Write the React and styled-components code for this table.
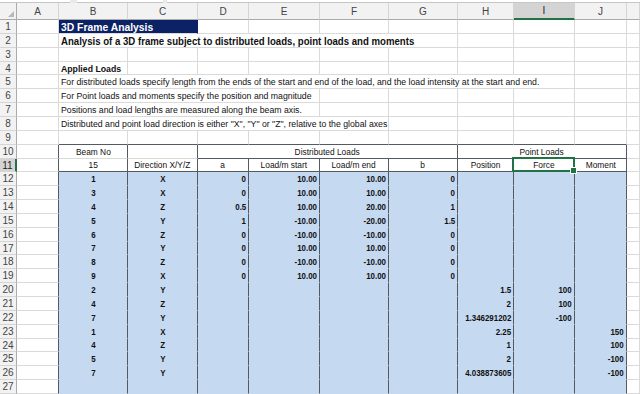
import React from "react";
import styled, { createGlobalStyle, css } from "styled-components";

const GlobalStyle = createGlobalStyle`
  html, body {
    margin: 0;
    padding: 0;
    background: #ffffff;
    overflow: hidden;
  }
  body {
    font-family: "Liberation Sans", Arial, sans-serif;
  }
`;

const COL_WIDTHS = [17, 42, 69, 70, 51, 71, 69, 69, 56, 61, 52, 13];
const LETTERS = ["A", "B", "C", "D", "E", "F", "G", "H", "I", "J", ""];
const ROW_COUNT = 27;
const ROW_STEP = 13.85;

const GRID = "#dadada";
const DARK = "#545a62";
const BLUE = "#c5d9f1";
const NAVY = "#0b2265";
const GREEN = "#217346";

const rowHeights = Array.from({ length: ROW_COUNT }, (_, i) =>
  Math.round((i + 1) * ROW_STEP) - Math.round(i * ROW_STEP)
);

const Page = styled.div`
  width: 640px;
  height: 394px;
  overflow: hidden;
  display: flex;
  flex-direction: column;
`;

const TopStrip = styled.div`
  height: 3px;
  display: flex;
  background: #e9e9e9;
`;

const StripBox = styled.div`
  width: ${(p) => p.$w}px;
  flex: ${(p) => (p.$grow ? 1 : "none")};
  margin-left: ${(p) => p.$gap || 0}px;
  background: #ffffff;
  border-bottom: 1px solid #c6c6c6;
`;

const Sheet = styled.div`
  display: grid;
  grid-template-columns: ${COL_WIDTHS.map((w) => w + "px").join(" ")};
  grid-template-rows: 17px ${(p) => p.$rows};
`;

const Corner = styled.div`
  position: relative;
  background: #f2f2f2;
  border-right: 1px solid #ababab;
  border-bottom: 1px solid #ababab;
  &::after {
    content: "";
    position: absolute;
    right: 2px;
    bottom: 2px;
    border-left: 6px solid transparent;
    border-bottom: 6px solid #b8b8b8;
  }
`;

const ColHead = styled.div`
  display: flex;
  align-items: center;
  justify-content: center;
  font-size: 10px;
  color: ${(p) => (p.$active ? "#1e1e1e" : "#444")};
  background: ${(p) => (p.$active ? "#d4d4d4" : "#f2f2f2")};
  border-right: 1px solid #d5d5d5;
  border-bottom: ${(p) => (p.$active ? `2px solid ${GREEN}` : "1px solid #ababab")};
  box-sizing: border-box;
`;

const RowHead = styled.div`
  display: flex;
  align-items: center;
  justify-content: center;
  font-size: 10px;
  color: ${(p) => (p.$active ? "#1e1e1e" : "#444")};
  background: ${(p) => (p.$active ? "#d4d4d4" : "#f2f2f2")};
  border-bottom: 1px solid #d5d5d5;
  border-right: ${(p) => (p.$active ? `2px solid ${GREEN}` : "1px solid #ababab")};
  box-sizing: border-box;
`;

const Cell = styled.div`
  position: relative;
  grid-column: span ${(p) => p.$span};
  box-sizing: border-box;
  display: flex;
  align-items: center;
  justify-content: ${(p) =>
    p.$align === "right" ? "flex-end" : p.$align === "center" ? "center" : "flex-start"};
  padding: 0 2px;
  white-space: nowrap;
  background: ${(p) => p.$bg || "#ffffff"};
  border-right: 1px solid ${(p) => p.$right};
  border-bottom: 1px solid ${(p) => p.$bottom};
  ${(p) =>
    p.$selected &&
    css`
      &::after {
        content: "";
        position: absolute;
        left: -2px;
        top: -2px;
        right: -1px;
        bottom: -1px;
        border: 2px solid ${GREEN};
      }
      &::before {
        content: "";
        position: absolute;
        right: -3px;
        bottom: -3px;
        width: 5px;
        height: 5px;
        background: ${GREEN};
        border: 1px solid #fff;
        z-index: 2;
      }
    `}
`;

// Excel's GDI text is a touch narrower than the browser's, hence the scaleX
const CellText = styled.span`
  display: inline-block;
  flex: none;
  font-size: ${(p) => p.$size}px;
  font-weight: ${(p) => (p.$bold ? 700 : 400)};
  color: ${(p) => (p.$title ? "#ffffff" : "#111")};
  transform: scaleX(0.9);
  transform-origin: ${(p) => (p.$align === "right" ? "right" : p.$align === "center" ? "center" : "left")} center;
`;

const T = (c, text, opts = {}) => ({ c, text, span: 1, size: 9.7, ...opts });

const dataRows = [
  ["1", "X", "0", "10.00", "10.00", "0", "", "", ""],
  ["3", "X", "0", "10.00", "10.00", "0", "", "", ""],
  ["4", "Z", "0.5", "10.00", "20.00", "1", "", "", ""],
  ["5", "Y", "1", "-10.00", "-20.00", "1.5", "", "", ""],
  ["6", "Z", "0", "-10.00", "-10.00", "0", "", "", ""],
  ["7", "Y", "0", "10.00", "10.00", "0", "", "", ""],
  ["8", "Z", "0", "-10.00", "-10.00", "0", "", "", ""],
  ["9", "X", "0", "10.00", "10.00", "0", "", "", ""],
  ["2", "Y", "", "", "", "", "1.5", "100", ""],
  ["4", "Z", "", "", "", "", "2", "100", ""],
  ["7", "Y", "", "", "", "", "1.346291202", "-100", ""],
  ["1", "X", "", "", "", "", "2.25", "", "150"],
  ["4", "Z", "", "", "", "", "1", "", "100"],
  ["5", "Y", "", "", "", "", "2", "", "-100"],
  ["7", "Y", "", "", "", "", "4.038873605", "", "-100"],
  ["", "", "", "", "", "", "", "", ""],
];

const headRow11 = ["15", "Direction X/Y/Z", "a", "Load/m start", "Load/m end", "b", "Position", "Force", "Moment"];

const sheetRows = {
  1: [T(2, "3D Frame Analysis", { span: 2, title: true, bold: true, bg: NAVY, size: 11.5 })],
  2: [T(2, "Analysis of a 3D frame subject to distributed loads, point loads and moments", { span: 6, bold: true, size: 10.7 })],
  4: [T(2, "Applied Loads", { bold: true })],
  5: [
    T(2, "For distributed loads specify length from the ends of the start and end of the load, and the load intensity at the start and end.", { span: 8 }),
  ],
  6: [T(2, "For Point loads and moments specify the position and magnitude", { span: 4 })],
  7: [T(2, "Positions and load lengths are measured along the beam axis.", { span: 4 })],
  8: [T(2, 'Distributed and point load direction is either "X",  "Y" or "Z", relative to the global axes', { span: 5 })],
  10: [
    T(2, "Beam No", { align: "center", size: 9.3 }),
    T(3, ""),
    T(4, "Distributed Loads", { span: 4, align: "center", size: 9.3 }),
    T(8, "Point Loads", { span: 3, align: "center", size: 9.3 }),
  ],
  11: headRow11.map((h, i) => T(i + 2, h, { align: "center", size: 9.3, selected: i === 7 })),
};

dataRows.forEach((vals, i) => {
  sheetRows[12 + i] = vals.map((v, j) =>
    T(j + 2, v, { bold: true, bg: BLUE, size: 8.8, align: j < 2 ? "center" : "right" })
  );
});

const rightColor = (r, endCol, bg) => {
  if (r >= 10 && [1, 2, 3, 7, 10].includes(endCol)) return DARK;
  if (r >= 11 && [4, 5, 6, 8, 9].includes(endCol)) return DARK;
  return bg && bg !== "#ffffff" ? bg : GRID;
};

const bottomColor = (r, startCol, bg) => {
  if (r === 9 && startCol >= 2 && startCol <= 10) return DARK;
  if (r === 10 && startCol >= 4 && startCol <= 10) return DARK;
  if (r === 11 && startCol >= 2 && startCol <= 10) return DARK;
  if (bg === BLUE) return BLUE;
  return GRID;
};

function buildRow(r) {
  const given = sheetRows[r] || [];
  const cells = [];
  let c = 1;
  while (c <= 11) {
    const hit = given.find((g) => g.c === c);
    const cell = hit || { c, span: 1, text: "", size: 9.7 };
    cells.push(cell);
    c += cell.span;
  }
  return cells;
}

export default function App() {
  const rows = Array.from({ length: ROW_COUNT }, (_, i) => i + 1);
  return (
    <Page>
      <GlobalStyle />
      <TopStrip>
        <StripBox $w={70} />
        <StripBox $w={86} $gap={7} />
        <StripBox $grow $gap={4} />
      </TopStrip>
      <Sheet $rows={rowHeights.map((h) => h + "px").join(" ")}>
        <Corner />
        {LETTERS.map((l, i) => (
          <ColHead key={"h" + i} $active={l === "I"}>
            {l}
          </ColHead>
        ))}
        {rows.map((r) => (
          <React.Fragment key={r}>
            <RowHead $active={r === 11}>{r}</RowHead>
            {buildRow(r).map((cell) => {
              const endCol = cell.c + cell.span - 1;
              return (
                <Cell
                  key={r + "-" + cell.c}
                  $span={cell.span}
                  $align={cell.align}
                  $bg={cell.bg}
                  $selected={cell.selected}
                  $right={rightColor(r, endCol, cell.bg)}
                  $bottom={bottomColor(r, cell.c, cell.bg)}
                >
                  {cell.text && (
                    <CellText
                      $size={cell.size}
                      $bold={cell.bold}
                      $title={cell.title}
                      $align={cell.align}
                    >
                      {cell.text}
                    </CellText>
                  )}
                </Cell>
              );
            })}
          </React.Fragment>
        ))}
      </Sheet>
    </Page>
  );
}
